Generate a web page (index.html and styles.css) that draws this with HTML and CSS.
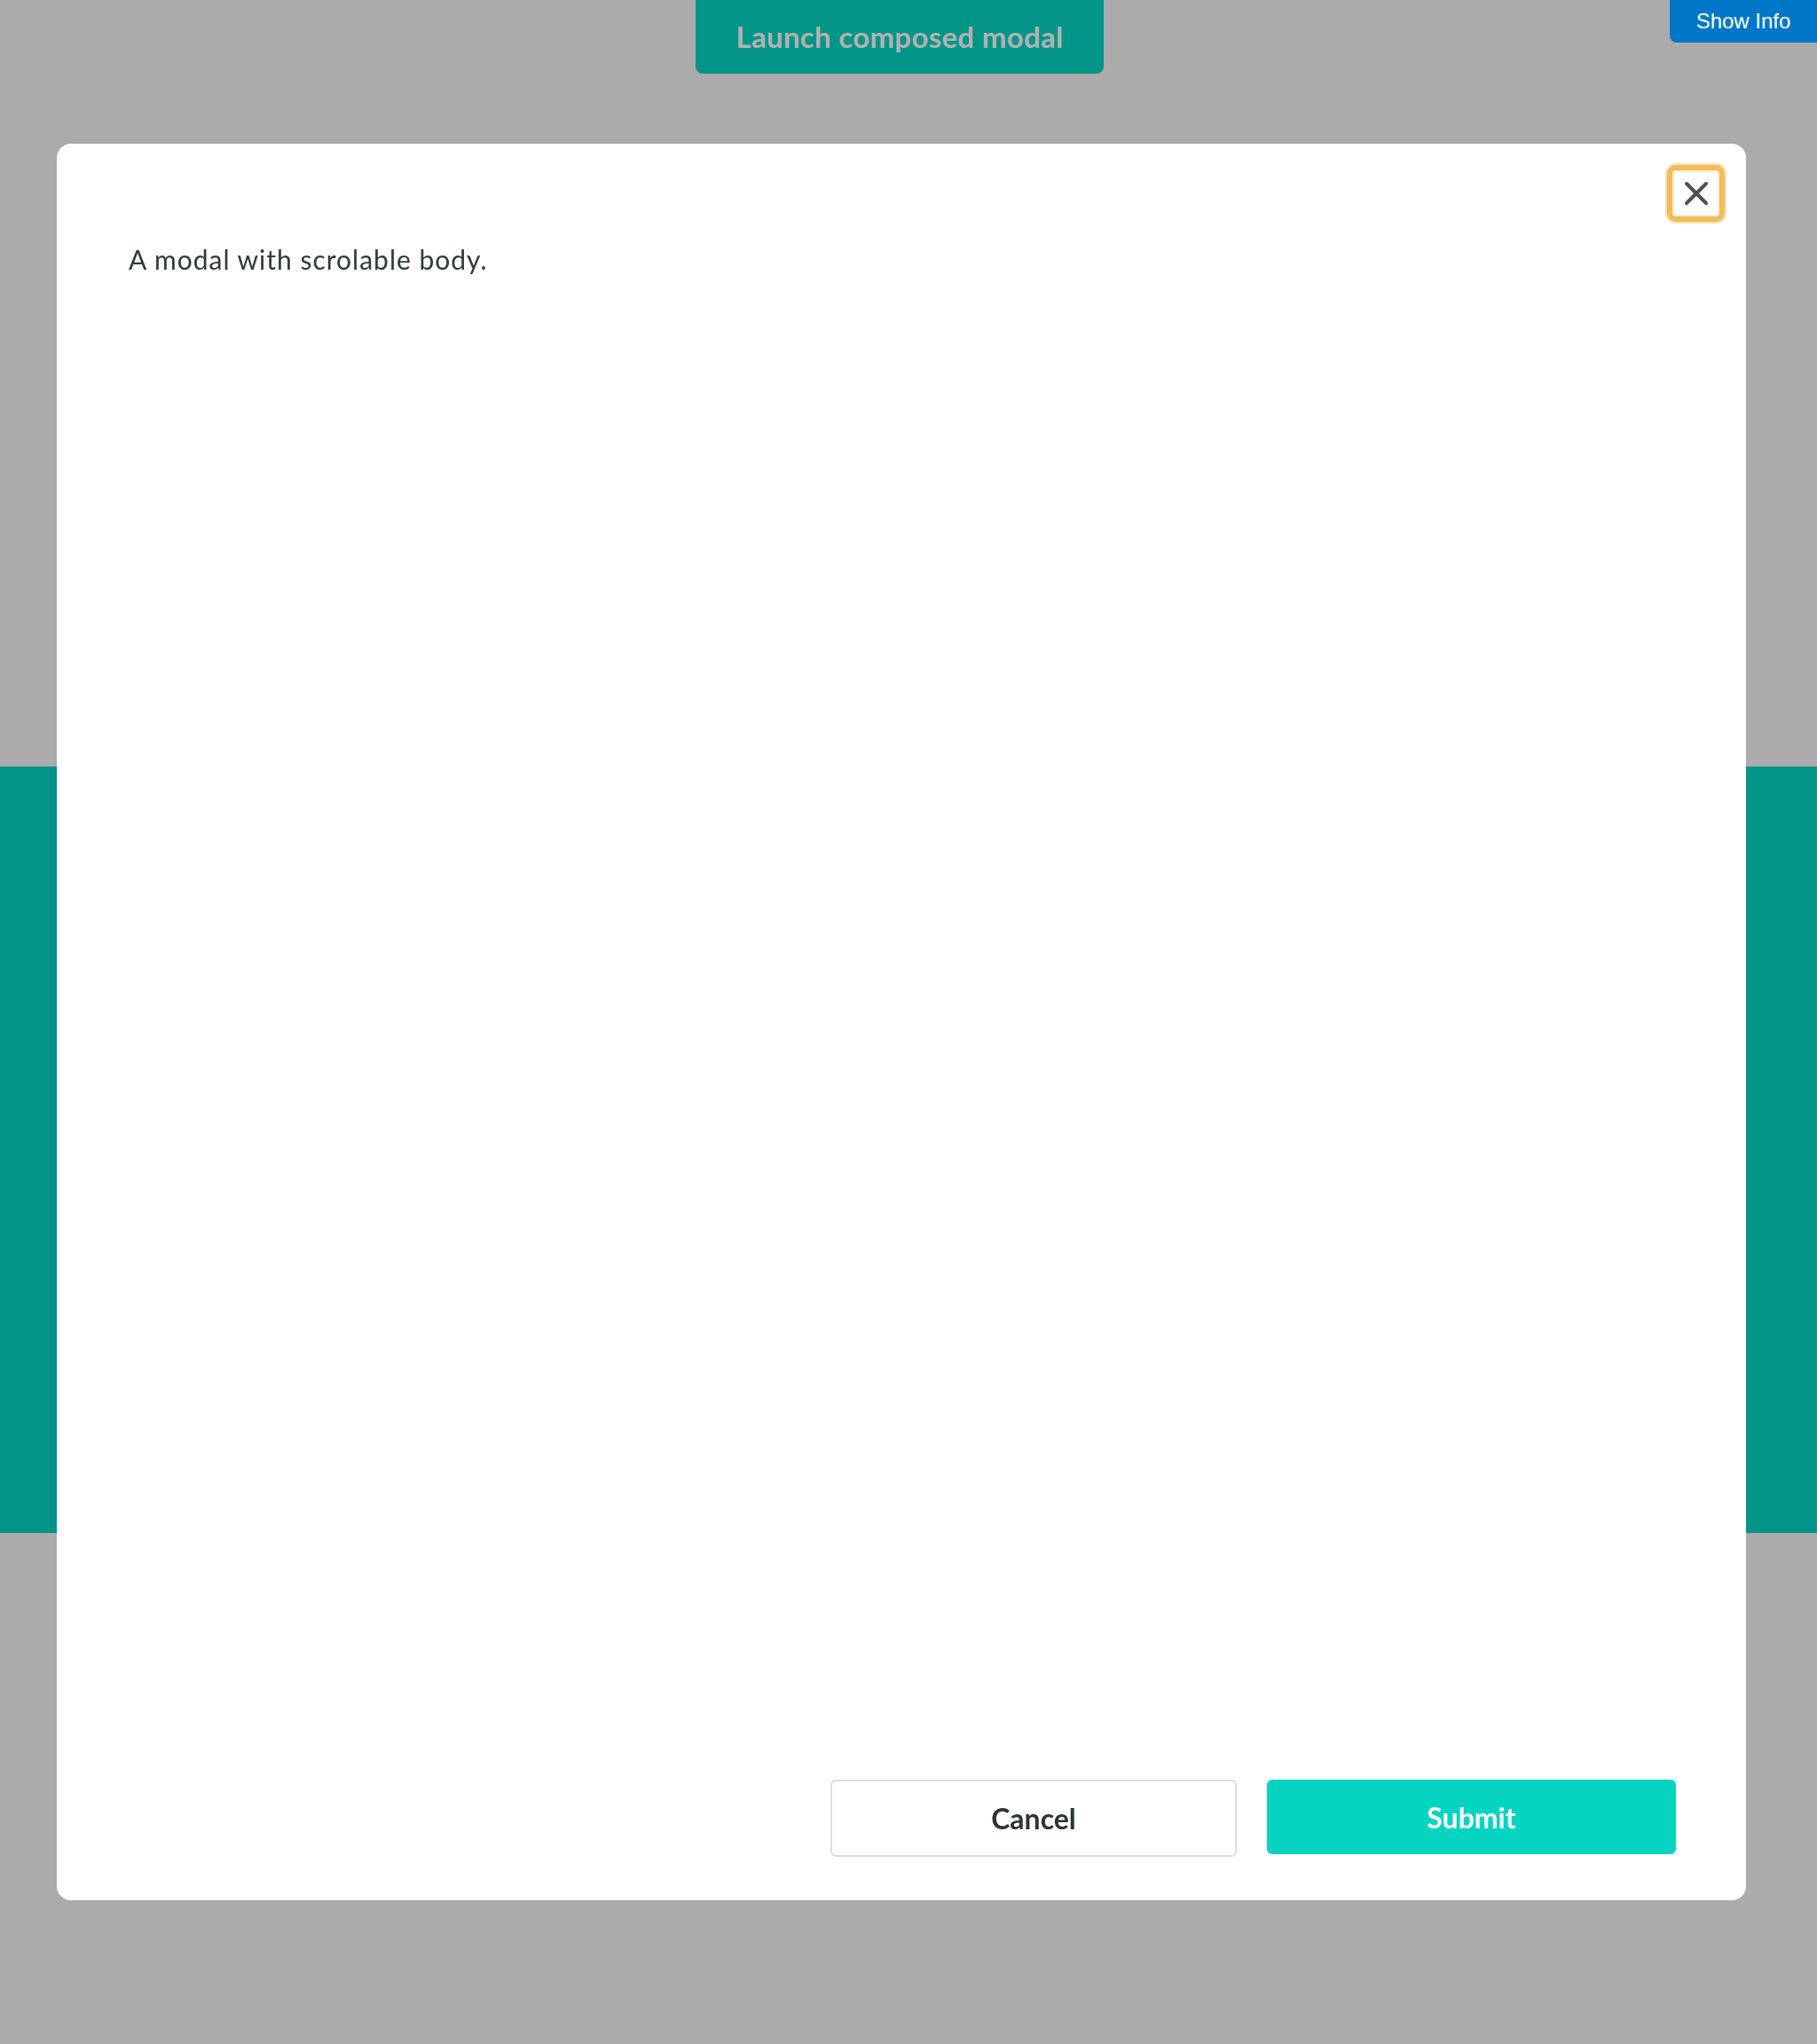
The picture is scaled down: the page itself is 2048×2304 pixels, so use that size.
FILE: index.html
```html
<!DOCTYPE html>
<html lang="en">
<head>
<meta charset="utf-8">
<title>Composed modal</title>
<link rel="stylesheet" href="styles.css">
</head>
<body>
<div class="page">
  <div class="top-area">
    <button class="launch-btn" type="button">Launch composed modal</button>
  </div>
  <div class="band"></div>
  <div class="bottom-area"></div>
</div>

<button class="show-info" type="button">Show Info</button>

<div class="overlay">
  <div class="modal" role="dialog" aria-modal="true">
    <div class="modal-head">
      <button class="close-btn" type="button" aria-label="Close">
        <svg width="28" height="28" viewBox="0 0 28 28" aria-hidden="true">
          <path d="M3 3 L25 25 M25 3 L3 25" stroke="#505050" stroke-width="4" stroke-linecap="round" fill="none"/>
        </svg>
      </button>
    </div>
    <div class="modal-body">
      <p class="body-text">A modal with scrolable body.</p>
    </div>
    <div class="modal-footer">
      <button class="btn btn-cancel" type="button">Cancel</button>
      <button class="btn btn-submit" type="button">Submit</button>
    </div>
  </div>
</div>
</body>
</html>
```

FILE: styles.css
```css
html, body {
  margin: 0;
  padding: 0;
}

body {
  width: 2048px;
  height: 2304px;
  overflow: hidden;
  font-family: Lato, "Noto Sans", "Liberation Sans", sans-serif;
  background: #ababab;
}

.page {
  display: flex;
  flex-direction: column;
  height: 2304px;
}

.top-area {
  height: 864px;
  background: #ababab;
  padding-left: 784px;
  box-sizing: border-box;
}

.launch-btn {
  width: 460px;
  height: 83px;
  border: none;
  border-radius: 0 0 8px 8px;
  background: #039587;
  color: #b2b2b2;
  font-family: Lato, "Noto Sans", sans-serif;
  font-weight: 700;
  font-size: 33px;
  letter-spacing: 0.3px;
  padding: 0 0 2px 0;
}

.band {
  height: 864px;
  background: #039587;
}

.bottom-area {
  flex: 1;
  background: #ababab;
}

.show-info {
  position: fixed;
  top: 0;
  right: 0;
  width: 166px;
  height: 48px;
  border: none;
  border-radius: 0 0 0 8px;
  background: #0077c8;
  color: #ffffff;
  font-family: "Liberation Sans", Arial, sans-serif;
  font-size: 24px;
  padding: 0;
  z-index: 20;
}

.overlay {
  position: fixed;
  inset: 0;
  padding: 162px 80px 0 64px;
  box-sizing: border-box;
  z-index: 10;
}

.modal {
  width: 1904px;
  height: 1980px;
  background: #ffffff;
  border-radius: 16px;
  display: flex;
  flex-direction: column;
  box-sizing: border-box;
}

.modal-head {
  display: flex;
  justify-content: flex-end;
  padding: 24px 24px 0 0;
  height: 88px;
  box-sizing: border-box;
}

.close-btn {
  width: 65px;
  height: 64px;
  box-sizing: border-box;
  border: 6px solid #f0bd5a;
  border-radius: 10px;
  box-shadow: 0 0 0 2px rgba(240, 189, 90, 0.45), inset 0 0 0 2px rgba(240, 189, 90, 0.3);
  background: #ffffff;
  display: flex;
  align-items: center;
  justify-content: center;
  padding: 0;
}

.modal-body {
  flex: 1;
  padding: 22px 80px 0 81px;
}

.body-text {
  margin: 0;
  font-size: 30px;
  line-height: 40px;
  letter-spacing: 1px;
  color: #2f3a3b;
}

.modal-footer {
  display: flex;
  justify-content: flex-end;
  align-items: flex-start;
  gap: 34px;
  padding: 0 79px 49px 0;
}

.btn {
  width: 460px;
  font-family: Lato, "Noto Sans", sans-serif;
  font-weight: 700;
  font-size: 32px;
  border-radius: 6px;
  padding: 0;
}

.btn-cancel {
  height: 87px;
  background: #ffffff;
  border: 2px solid #dcdcdc;
  color: #2d3436;
  width: 458px;
}

.btn-submit {
  height: 84px;
  background: #05d4c0;
  border: none;
  color: #ffffff;
  width: 461px;
}
```
